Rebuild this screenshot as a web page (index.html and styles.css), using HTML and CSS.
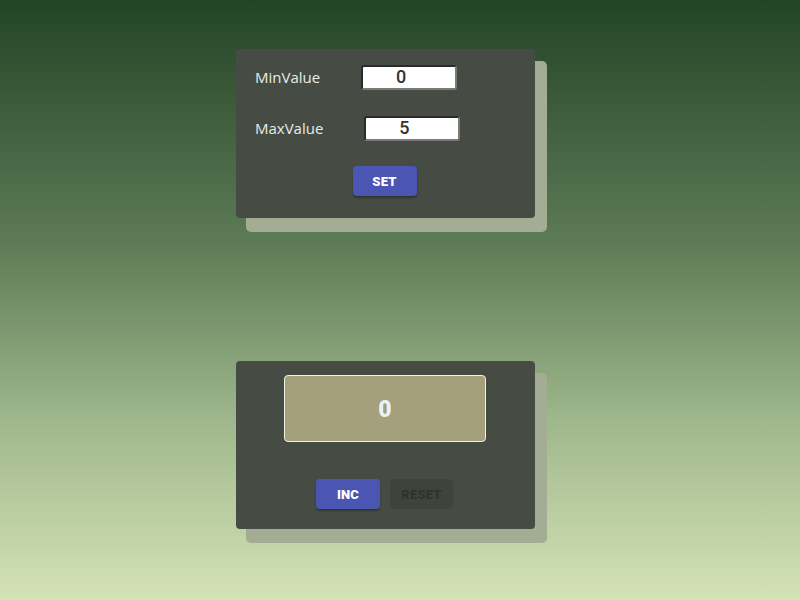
FILE: index.html
```html
<!DOCTYPE html>
<html>
<head>
<meta charset="utf-8">
<link rel="stylesheet" href="styles.css">
</head>
<body>
<div class="page">
  <div class="card settings">
    <div class="row">
      <span class="label">MinValue</span>
      <input class="field" type="text" value="0">
    </div>
    <div class="row">
      <span class="label">MaxValue</span>
      <input class="field" type="text" value="5">
    </div>
    <div class="actions">
      <button class="btn primary">SET</button>
    </div>
  </div>
  <div class="card counter">
    <div class="display">0</div>
    <div class="actions">
      <button class="btn primary">INC</button>
      <button class="btn disabled">RESET</button>
    </div>
  </div>
</div>
</body>
</html>
```

FILE: styles.css
```css
html, body {
  margin: 0;
  height: 100%;
}
body {
  background: linear-gradient(to bottom, #234426 0%, #5c7a55 40%, #9fb78c 70%, #d4e3b5 100%);
  font-family: "Open Sans", "Noto Sans", sans-serif;
}
.page {
  display: flex;
  flex-direction: column;
  padding-top: 49px;
  padding-left: 236px;
  gap: 143px;
}
.card {
  width: 299px;
  box-sizing: border-box;
  background: #464c43;
  border-radius: 4px;
  box-shadow: 11px 13px 0 1px #a3ad93;
}
.settings {
  height: 169px;
  padding: 15px 19px 0;
}
.row {
  display: flex;
  align-items: center;
  height: 26px;
  margin-bottom: 25px;
}
.label {
  color: #e9ebe6;
  font-size: 15px;
  margin-right: 41px;
}
.field {
  width: 96px;
  height: 25px;
  box-sizing: border-box;
  border: 2px solid;
  border-color: #2a2a2a #7a7a7a #7a7a7a #2a2a2a;
  border-radius: 3px;
  background: #fff;
  font-family: Roboto, Arial, sans-serif;
  font-size: 18px;
  font-weight: 500;
  color: #333;
  text-align: center;
  padding: 0 16px 2px 0;
  outline: none;
}
.actions {
  display: flex;
  justify-content: center;
  gap: 10px;
  margin-left: -2px;
}
.settings .actions {
  margin-top: 1px;
}
.btn {
  width: 64px;
  height: 30px;
  border: none;
  border-radius: 4px;
  font-family: Roboto, sans-serif;
  font-weight: 900;
  font-size: 13px;
  padding: 0;
  letter-spacing: 0.2px;
}
.primary {
  background: #4a56b2;
  color: #fff;
  box-shadow: 0 2px 2px rgba(0,0,0,0.3);
}
.disabled {
  background: rgba(0,0,0,0.1);
  color: rgba(0,0,0,0.25);
  width: 63px;
}
.counter {
  height: 168px;
  padding-top: 14px;
  display: flex;
  flex-direction: column;
  align-items: center;
}
.display {
  width: 202px;
  height: 67px;
  box-sizing: border-box;
  margin-left: -1px;
  background: #a3a07b;
  border: 1px solid #f0f0ea;
  border-radius: 4px;
  display: flex;
  align-items: center;
  justify-content: center;
  color: #edf0f7;
  font-family: Roboto, sans-serif;
  font-weight: 900;
  font-size: 23px;
  padding-top: 2px;
  margin-bottom: 37px;
}
```
